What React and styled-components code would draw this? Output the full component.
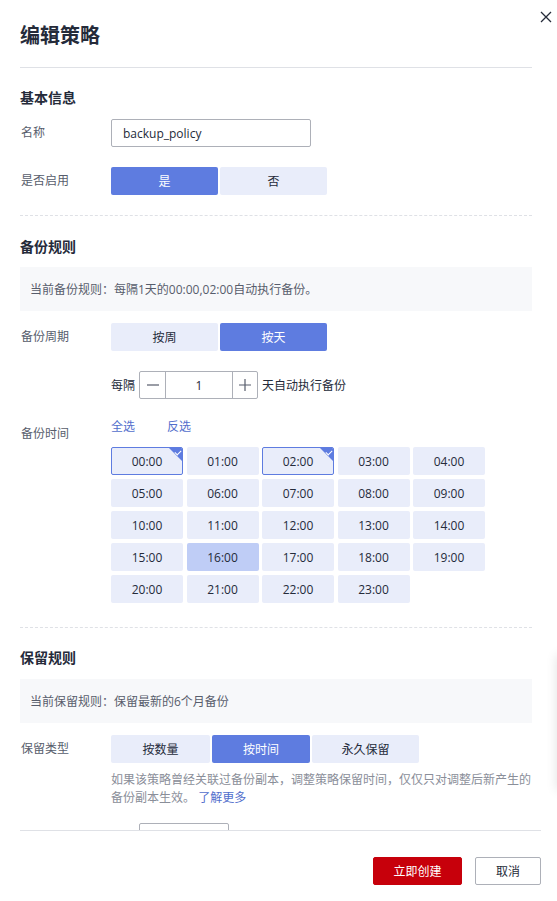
import React from "react";
import styled, { createGlobalStyle } from "styled-components";

const GlobalStyle = createGlobalStyle`
  html, body {
    margin: 0;
    padding: 0;
    background: #fff;
  }
  body {
    font-family: "Open Sans", "Noto Sans CJK SC", sans-serif;
    font-size: 12px;
    color: #252b3a;
  }
  * {
    box-sizing: border-box;
  }
`;

const Drawer = styled.div`
  position: relative;
  width: 557px;
  height: 901px;
  display: flex;
  flex-direction: column;
  overflow: hidden;
  background: #fff;
`;

const Header = styled.header`
  height: 68px;
  margin: 0 25px 0 20px;
  padding-top: 22px;
  border-bottom: 1px solid #dfe1e6;
`;

const Title = styled.h1`
  margin: 0;
  font-size: 20px;
  line-height: 28px;
  font-weight: bold;
  color: #252b3a;
`;

const CloseBtn = styled.div`
  position: absolute;
  top: 11px;
  right: 5px;
  width: 12px;
  height: 12px;
  display: flex;
  cursor: pointer;
`;

const Body = styled.div`
  flex: 1;
  overflow: hidden;
  padding: 0 25px 0 20px;
`;

const SectionTitle = styled.h3`
  margin: ${(p) => p.$top}px 0 0;
  font-size: 14px;
  line-height: 20px;
  font-weight: bold;
  color: #252b3a;
`;

const DashedLine = styled.div`
  margin-top: ${(p) => p.$top}px;
  border-top: 1px dashed #dfe1e6;
`;

const InfoBox = styled.div`
  margin-top: ${(p) => p.$top}px;
  height: 44px;
  padding-left: 10px;
  display: flex;
  align-items: center;
  background: #f7f8fa;
  color: #575d6c;
  font-size: 12px;
`;

const FormRow = styled.div`
  margin-top: ${(p) => p.$top}px;
  display: flex;
  align-items: ${(p) => (p.$alignTop ? "flex-start" : "center")};
`;

const Label = styled.div`
  width: 91px;
  flex-shrink: 0;
  padding-left: 1px;
  padding-top: ${(p) => p.$pad || 0}px;
  line-height: 20px;
  color: #575d6c;
  font-size: 12px;
`;

const Control = styled.div`
  flex: 1;
  min-width: 0;
`;

const TextInput = styled.div`
  width: ${(p) => p.$w}px;
  height: 28px;
  margin-left: ${(p) => p.$indent || 0}px;
  border: 1px solid #adb0b8;
  border-radius: 2px;
  padding-left: 11px;
  display: flex;
  align-items: center;
  font-size: 12px;
  color: #252b3a;
`;

const ToggleGroup = styled.div`
  display: flex;
  gap: 2px;
`;

const ToggleBtn = styled.div`
  width: ${(p) => p.$w}px;
  height: 28px;
  border-radius: 2px;
  display: flex;
  align-items: center;
  justify-content: center;
  font-size: 12px;
  background: ${(p) => (p.$active ? "#5e7ce0" : "#e9edfa")};
  color: ${(p) => (p.$active ? "#fff" : "#252b3a")};
  cursor: pointer;
`;

const IntervalLine = styled.div`
  display: flex;
  align-items: center;
  gap: 4px;
  font-size: 12px;
  color: #252b3a;
`;

const Stepper = styled.div`
  display: flex;
  width: 119px;
  height: 28px;
  border: 1px solid #adb0b8;
  border-radius: 2px;
`;

const StepBtn = styled.div`
  width: ${(p) => p.$w}px;
  display: flex;
  align-items: center;
  justify-content: center;
  border-left: ${(p) => (p.$side === "right" ? "1px solid #adb0b8" : "none")};
  border-right: ${(p) => (p.$side === "left" ? "1px solid #adb0b8" : "none")};
  color: #575d6c;
`;

const StepValue = styled.div`
  flex: 1;
  display: flex;
  align-items: center;
  justify-content: center;
  font-size: 12px;
`;

const LinkRow = styled.div`
  display: flex;
  gap: 32px;
  line-height: 20px;
`;

const TextLink = styled.span`
  color: #526ecc;
  font-size: 12px;
  cursor: pointer;
`;

const HourGrid = styled.div`
  margin-top: 10px;
  display: grid;
  grid-template-columns: repeat(5, 72px);
  grid-auto-rows: 28px;
  column-gap: 3.5px;
  row-gap: 4px;
`;

const HourCell = styled.div`
  position: relative;
  display: flex;
  align-items: center;
  justify-content: center;
  border-radius: 2px;
  font-size: 12px;
  color: #252b3a;
  overflow: hidden;
  background: ${(p) => (p.$hover ? "#bfcdf6" : "#e9edfa")};
  border: 1px solid ${(p) => (p.$selected ? "#5e7ce0" : "transparent")};
  cursor: pointer;

  &::before {
    content: "";
    display: ${(p) => (p.$selected ? "block" : "none")};
    position: absolute;
    top: 0;
    right: 0;
    border-top: 13px solid #5e7ce0;
    border-left: 13px solid transparent;
  }
  &::after {
    content: "";
    display: ${(p) => (p.$selected ? "block" : "none")};
    position: absolute;
    top: 2px;
    right: 1px;
    width: 5px;
    height: 3px;
    border-left: 1.5px solid #fff;
    border-bottom: 1.5px solid #fff;
    transform: rotate(-45deg);
  }
`;

const HelpText = styled.p`
  margin: 8px 0 0 91px;
  font-size: 12px;
  line-height: 18px;
  color: #8a8e99;
  white-space: nowrap;
`;

const Footer = styled.footer`
  height: 71px;
  margin: 0 16px 0 20px;
  padding-top: 26px;
  border-top: 1px solid #dfe1e6;
  display: flex;
  justify-content: flex-end;
  gap: 13px;
`;

const FooterBtn = styled.div`
  width: ${(p) => p.$w}px;
  height: 28px;
  border-radius: 2px;
  display: flex;
  align-items: center;
  justify-content: center;
  font-size: 12px;
  cursor: pointer;
  background: ${(p) => (p.$primary ? "#c7000b" : "#fff")};
  color: ${(p) => (p.$primary ? "#fff" : "#252b3a")};
  border: 1px solid ${(p) => (p.$primary ? "#c7000b" : "#adb0b8")};
`;

const EdgeShadow = styled.div`
  position: absolute;
  top: 655px;
  right: -22px;
  width: 22px;
  height: 135px;
  background: #fff;
  box-shadow: 0 0 12px rgba(0, 0, 0, 0.12);
`;

const hours = Array.from({ length: 24 }, (_, i) => `${String(i).padStart(2, "0")}:00`);
const selectedHours = ["00:00", "02:00"];

export default function App() {
  return (
    <Drawer>
      <GlobalStyle />
      <Header>
        <Title>编辑策略</Title>
      </Header>
      <CloseBtn>
        <svg width="12" height="12" viewBox="0 0 12 12">
          <path d="M1 1 L11 11 M11 1 L1 11" stroke="#252b3a" strokeWidth="1.3" fill="none" />
        </svg>
      </CloseBtn>

      <Body>
        <SectionTitle $top={20}>基本信息</SectionTitle>
        <FormRow $top={11}>
          <Label>名称</Label>
          <Control>
            <TextInput $w={200}>backup_policy</TextInput>
          </Control>
        </FormRow>
        <FormRow $top={20}>
          <Label>是否启用</Label>
          <ToggleGroup>
            <ToggleBtn $w={107} $active>是</ToggleBtn>
            <ToggleBtn $w={107}>否</ToggleBtn>
          </ToggleGroup>
        </FormRow>

        <DashedLine $top={20} />
        <SectionTitle $top={21}>备份规则</SectionTitle>
        <InfoBox $top={10}>当前备份规则：每隔1天的00:00,02:00自动执行备份。</InfoBox>
        <FormRow $top={12}>
          <Label>备份周期</Label>
          <ToggleGroup>
            <ToggleBtn $w={107}>按周</ToggleBtn>
            <ToggleBtn $w={107} $active>按天</ToggleBtn>
          </ToggleGroup>
        </FormRow>
        <FormRow $top={20}>
          <Label />
          <IntervalLine>
            每隔
            <Stepper>
              <StepBtn $w={26} $side="left">
                <svg width="14" height="14" viewBox="0 0 14 14">
                  <path d="M1 7 H13" stroke="#575d6c" strokeWidth="1.2" />
                </svg>
              </StepBtn>
              <StepValue>1</StepValue>
              <StepBtn $w={25} $side="right">
                <svg width="14" height="14" viewBox="0 0 14 14">
                  <path d="M1 7 H13 M7 1 V13" stroke="#575d6c" strokeWidth="1.2" />
                </svg>
              </StepBtn>
            </Stepper>
            天自动执行备份
          </IntervalLine>
        </FormRow>
        <FormRow $top={18} $alignTop>
          <Label $pad={7}>备份时间</Label>
          <Control>
            <LinkRow>
              <TextLink>全选</TextLink>
              <TextLink>反选</TextLink>
            </LinkRow>
            <HourGrid>
              {hours.map((h) => (
                <HourCell key={h} $selected={selectedHours.includes(h)} $hover={h === "16:00"}>
                  {h}
                </HourCell>
              ))}
            </HourGrid>
          </Control>
        </FormRow>

        <DashedLine $top={24} />
        <SectionTitle $top={20}>保留规则</SectionTitle>
        <InfoBox $top={11}>当前保留规则：保留最新的6个月备份</InfoBox>
        <FormRow $top={12}>
          <Label>保留类型</Label>
          <ToggleGroup>
            <ToggleBtn $w={99}>按数量</ToggleBtn>
            <ToggleBtn $w={98} $active>按时间</ToggleBtn>
            <ToggleBtn $w={107}>永久保留</ToggleBtn>
          </ToggleGroup>
        </FormRow>
        <HelpText>
          如果该策略曾经关联过备份副本，调整策略保留时间，仅仅只对调整后新产生的
          <br />
          备份副本生效。 <TextLink>了解更多</TextLink>
        </HelpText>
        <FormRow $top={16}>
          <Label />
          <TextInput $w={90} $indent={28} />
        </FormRow>
      </Body>

      <Footer>
        <FooterBtn $w={89} $primary>立即创建</FooterBtn>
        <FooterBtn $w={66}>取消</FooterBtn>
      </Footer>
      <EdgeShadow />
    </Drawer>
  );
}
